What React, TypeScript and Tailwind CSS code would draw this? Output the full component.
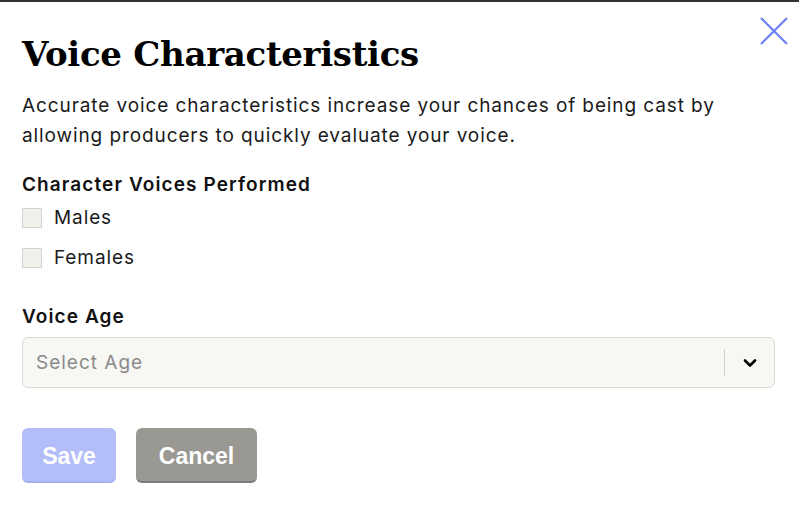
import { useState } from 'react';

const voices = ['Males', 'Females'];

export default function App() {
  const [checked, setChecked] = useState<Record<string, boolean>>({});

  return (
    <div className="h-[508px] w-[799px] bg-white border-t-2 border-[#333333] relative overflow-hidden tracking-[0.9px]" style={{ fontFamily: '"Inter", "Liberation Sans", sans-serif' }}>
      <button className="absolute right-[10px] top-[14px] text-[#6c7ff5]" aria-label="Close">
        <svg width="30" height="30" viewBox="0 0 30 30" fill="none" stroke="currentColor" strokeWidth="2.2">
          <path d="M2 2 L28 28 M28 2 L2 28" />
        </svg>
      </button>

      <div className="px-[22px] pt-[28px]">
        <h1 className="text-[34px] leading-[48px] font-bold text-black tracking-[-0.3px]" style={{ fontFamily: '"DejaVu Serif", "Liberation Serif", serif' }}>
          Voice Characteristics
        </h1>
        <p className="mt-[13px] text-[19px] leading-[30px] text-[#1a1a1a]">
          Accurate voice characteristics increase your chances of being cast by allowing producers to quickly evaluate your voice.
        </p>

        <div className="mt-[22px] text-[19px] leading-[24px] font-semibold text-[#111] tracking-[1.1px]">Character Voices Performed</div>
        <div className="mt-[9px] flex flex-col gap-[16px]">
          {voices.map((v) => (
            <label key={v} className="flex items-center gap-[12px] h-[24px] cursor-pointer">
              <span
                onClick={() => setChecked({ ...checked, [v]: !checked[v] })}
                className="w-[20px] h-[20px] bg-[#f1f0eb] border border-[#d3d2cc]"
              />
              <span className="text-[19px] text-[#1a1a1a]">{v}</span>
            </label>
          ))}
        </div>

        <div className="mt-[35px] text-[19px] leading-[24px] font-semibold text-[#111] tracking-[1.1px]">Voice Age</div>
        <div className="mt-[8px] h-[51px] w-[753px] flex items-center bg-[#f7f7f3] border border-[#d9d9d4] rounded-[6px]">
          <span className="flex-1 pl-[13px] pt-[2px] text-[19px] text-[#8a8a8a] tracking-[1px]">Select Age</span>
          <span className="w-px h-[27px] bg-[#d0d0cc]" />
          <span className="w-[49px] flex justify-center text-black">
            <svg width="14" height="10" viewBox="0 0 14 10" fill="none" stroke="currentColor" strokeWidth="2.6" strokeLinecap="round" strokeLinejoin="round">
              <path d="M2 2.5 L7 7.5 L12 2.5" />
            </svg>
          </span>
        </div>

        <div className="mt-[40px] flex gap-[20px] tracking-normal">
          <button className="h-[55px] w-[94px] pt-[4px] rounded-[6px] bg-[#b3bdf9] text-white text-[23px] font-bold border-b-2 border-[#a6b1f2]" style={{ fontFamily: '"Liberation Sans", sans-serif' }}>
            Save
          </button>
          <button className="h-[55px] w-[121px] pt-[4px] rounded-[6px] bg-[#9a9893] text-white text-[23px] font-bold border-b-2 border-[#7d7b77]" style={{ fontFamily: '"Liberation Sans", sans-serif' }}>
            Cancel
          </button>
        </div>
      </div>
    </div>
  );
}
